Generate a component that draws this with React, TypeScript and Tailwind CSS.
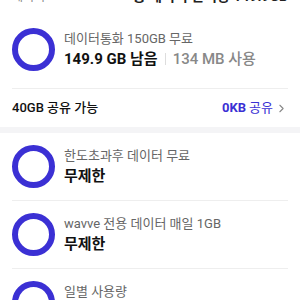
import { ChevronRight } from "lucide-react";

const font = { fontFamily: 'Roboto, "Noto Sans CJK KR", "Noto Sans", sans-serif' };

function Ring() {
  return <div className="h-[43px] w-[43px] shrink-0 rounded-full border-[6px] border-[#3b30d4]" />;
}

function Item({ title, main, children }: { title: string; main: string; children?: React.ReactNode }) {
  return (
    <div className="flex items-center gap-[9px] py-3">
      <Ring />
      <div className="flex flex-col gap-[3px]">
        <div className="text-[13px] leading-[16px] text-[#666]">{title}</div>
        <div className="flex items-center text-[15px] font-bold leading-[18px] text-[#111]">
          {main}
          {children}
        </div>
      </div>
    </div>
  );
}

export default function App() {
  return (
    <div className="h-[300px] w-[300px] overflow-hidden bg-white" style={font}>
      <div className="flex h-[3px] items-end justify-between overflow-hidden px-3">
        <span className="text-[12px] leading-none text-[#888]">데이터</span>
        <span className="text-[14px] font-bold leading-none text-[#222]">총 데이터 잔여량 149.9GB</span>
      </div>
      <div className="mx-3 border-b border-[#eee] pt-[13px] pb-[5px]">
        <Item title="데이터통화 150GB 무료" main="149.9 GB 남음">
          <span className="mx-[7px] h-[12px] w-px bg-[#ddd]" />
          <span className="font-medium text-[#888]">134 MB 사용</span>
        </Item>
      </div>
      <div className="flex h-[38px] items-center justify-between px-3">
        <span className="text-[13px] font-medium text-[#111]">40GB 공유 가능</span>
        <span className="flex items-center text-[13px] text-[#3b30d4]">
          <span className="font-bold">0KB</span>
          <span className="ml-[3px]">공유</span>
          <ChevronRight size={13} className="ml-[2px] text-[#888]" />
        </span>
      </div>
      <div className="h-[6px] bg-[#f4f4f6]" />
      <div className="mx-3">
        <div className="border-b border-[#eee]">
          <Item title="한도초과후 데이터 무료" main="무제한" />
        </div>
        <div className="border-b border-[#eee]">
          <Item title="wavve 전용 데이터 매일 1GB" main="무제한" />
        </div>
        <Item title="일별 사용량" main="0.1 GB 사용" />
      </div>
    </div>
  );
}
